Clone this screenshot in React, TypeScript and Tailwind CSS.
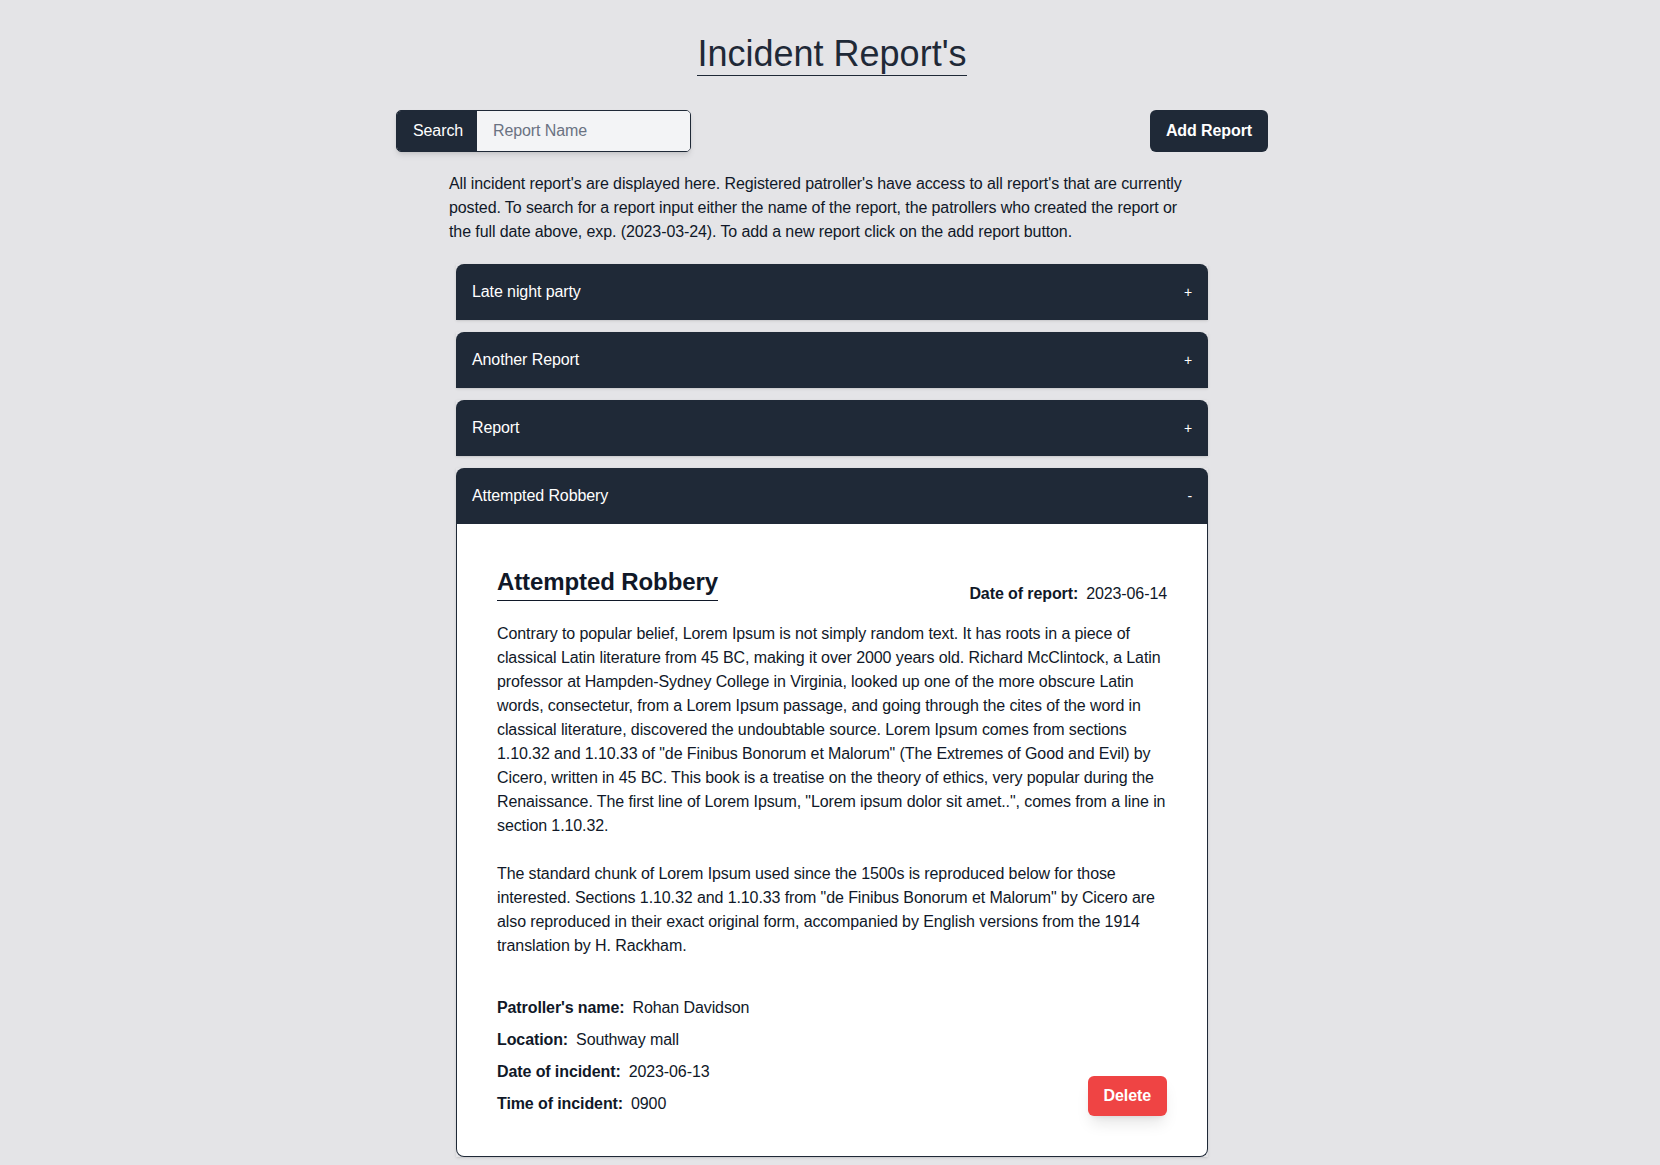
import React, { useState } from 'react';

interface Report {
  id: number;
  title: string;
  dateOfReport: string;
  body: string[];
  patroller: string;
  location: string;
  dateOfIncident: string;
  timeOfIncident: string;
}

const lorem1 =
  'Contrary to popular belief, Lorem Ipsum is not simply random text. It has roots in a piece of classical Latin literature from 45 BC, making it over 2000 years old. Richard McClintock, a Latin professor at Hampden-Sydney College in Virginia, looked up one of the more obscure Latin words, consectetur, from a Lorem Ipsum passage, and going through the cites of the word in classical literature, discovered the undoubtable source. Lorem Ipsum comes from sections 1.10.32 and 1.10.33 of "de Finibus Bonorum et Malorum" (The Extremes of Good and Evil) by Cicero, written in 45 BC. This book is a treatise on the theory of ethics, very popular during the Renaissance. The first line of Lorem Ipsum, "Lorem ipsum dolor sit amet..", comes from a line in section 1.10.32.';

const lorem2 =
  'The standard chunk of Lorem Ipsum used since the 1500s is reproduced below for those interested. Sections 1.10.32 and 1.10.33 from "de Finibus Bonorum et Malorum" by Cicero are also reproduced in their exact original form, accompanied by English versions from the 1914 translation by H. Rackham.';

const reports: Report[] = [
  { id: 1, title: 'Late night party', dateOfReport: '2023-06-10', body: [lorem1, lorem2], patroller: 'Rohan Davidson', location: 'Southway mall', dateOfIncident: '2023-06-09', timeOfIncident: '2300' },
  { id: 2, title: 'Another Report', dateOfReport: '2023-06-11', body: [lorem1, lorem2], patroller: 'Rohan Davidson', location: 'Southway mall', dateOfIncident: '2023-06-11', timeOfIncident: '1200' },
  { id: 3, title: 'Report', dateOfReport: '2023-06-12', body: [lorem1, lorem2], patroller: 'Rohan Davidson', location: 'Southway mall', dateOfIncident: '2023-06-12', timeOfIncident: '1400' },
  { id: 4, title: 'Attempted Robbery', dateOfReport: '2023-06-14', body: [lorem1, lorem2], patroller: 'Rohan Davidson', location: 'Southway mall', dateOfIncident: '2023-06-13', timeOfIncident: '0900' },
];

function Detail({ label, value }: { label: string; value: string }) {
  return (
    <div className="leading-6">
      <span className="font-semibold mr-2">{label}</span>
      <span>{value}</span>
    </div>
  );
}

export default function App() {
  const [open, setOpen] = useState<number | null>(4);
  const [query, setQuery] = useState('');

  return (
    <main className="min-h-screen bg-[#e4e4e7] pb-10 text-gray-900 tracking-[-0.1px] font-['Liberation_Sans',Arial,sans-serif]">
      <div className="w-[876px] mx-auto pl-1 pt-[34px]">
        <div className="text-center">
          <h1 className="inline-block text-4xl leading-10 text-[#1f2937] border-b border-[#1f2937] pb-[1px] tracking-normal">Incident Report's</h1>
        </div>

        {/* Search + add */}
        <div className="flex items-center justify-between mt-[34px]">
          <div className="flex w-[295px] h-[42px] rounded-[5px] border border-[#1f2937] overflow-hidden shadow-md">
            <span className="bg-[#1f2937] text-white px-4 flex items-center w-[80px]">Search</span>
            <input
              value={query}
              onChange={(e) => setQuery(e.target.value)}
              placeholder="Report Name"
              className="flex-1 min-w-0 bg-[#f3f4f6] px-4 outline-none placeholder:text-gray-500"
            />
          </div>
          <button className="bg-[#1f2937] text-white font-bold rounded-md h-[42px] px-4 whitespace-nowrap">Add Report</button>
        </div>

        <p className="w-[746px] ml-[53px] mt-5 leading-6">
          All incident report's are displayed here. Registered patroller's have access to all report's that are currently posted. To search for a report input either the name of the report, the patrollers who created the report or the full date above, exp. (2023-03-24). To add a new report click on the add report button.
        </p>

        {/* Accordion */}
        <div className="w-[752px] mx-auto mt-5 space-y-3">
          {reports.map((r) => {
            const isOpen = open === r.id;
            return (
              <div key={r.id} className="shadow">
                <button
                  onClick={() => setOpen(isOpen ? null : r.id)}
                  className="w-full h-14 px-4 flex items-center justify-between bg-[#1f2937] text-white rounded-t-lg text-left"
                >
                  <span>{r.title}</span>
                  <span className="text-sm">{isOpen ? '-' : '+'}</span>
                </button>
                {isOpen && (
                  <div className="bg-white border border-t-0 border-[#1f2937] rounded-b-lg px-10 pt-[42px] pb-10">
                    <div className="flex items-end justify-between">
                      <h2 className="text-2xl leading-8 font-semibold border-b border-gray-900 pb-[2px] mb-[5px]">{r.title}</h2>
                      <div className="leading-6">
                        <span className="font-semibold mr-2">Date of report:</span>
                        <span>{r.dateOfReport}</span>
                      </div>
                    </div>
                    <p className="mt-4 leading-6">{r.body[0]}</p>
                    <p className="mt-6 leading-6">{r.body[1]}</p>
                    <div className="flex items-end justify-between mt-[38px]">
                      <div className="space-y-2">
                        <Detail label="Patroller's name:" value={r.patroller} />
                        <Detail label="Location:" value={r.location} />
                        <Detail label="Date of incident:" value={r.dateOfIncident} />
                        <Detail label="Time of incident:" value={r.timeOfIncident} />
                      </div>
                      <button className="bg-[#ef4444] text-white font-bold rounded-md h-10 px-4 shadow-lg">Delete</button>
                    </div>
                  </div>
                )}
              </div>
            );
          })}
        </div>
      </div>
    </main>
  );
}
